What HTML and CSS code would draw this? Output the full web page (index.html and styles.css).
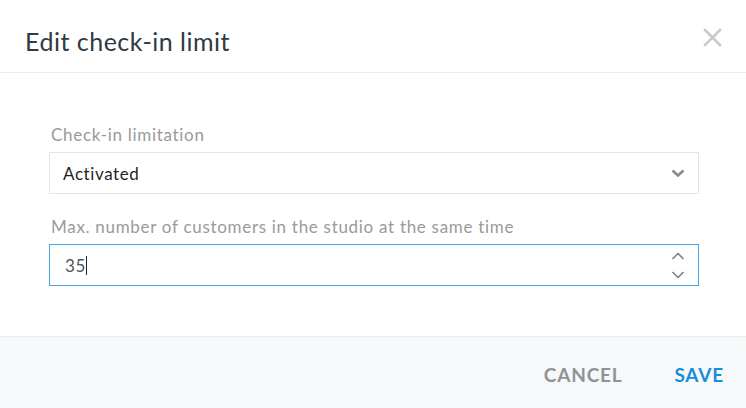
FILE: index.html
```html
<!DOCTYPE html>
<html>
<head>
<meta charset="utf-8">
<link rel="stylesheet" href="styles.css">
</head>
<body>
<div class="dialog">
  <div class="header">
    <h1 class="title">Edit check-in limit</h1>
    <button class="close" aria-label="Close">
      <svg width="19" height="19" viewBox="0 0 19 19"><path d="M2 2L17 17M17 2L2 17" stroke="#c9c9c9" stroke-width="2.6" stroke-linecap="square" fill="none"/></svg>
    </button>
  </div>
  <div class="content">
    <div class="field">
      <label class="label">Check-in limitation</label>
      <div class="box select">
        <span class="value">Activated</span>
        <svg class="chev" width="14" height="8" viewBox="0 0 14 8"><path d="M1.5 1.5L7 6.5L12.5 1.5" stroke="#8a8a8a" stroke-width="2.6" fill="none"/></svg>
      </div>
    </div>
    <div class="field">
      <label class="label">Max. number of customers in the studio at the same time</label>
      <div class="box input">
        <span class="value num">35<span class="caret"></span></span>
        <div class="spin">
          <svg width="14" height="8" viewBox="0 0 14 8"><path d="M1.5 7L7 1.5L12.5 7" stroke="#7a7a7a" stroke-width="1.5" fill="none"/></svg>
          <svg width="14" height="8" viewBox="0 0 14 8"><path d="M1.5 1L7 6.5L12.5 1" stroke="#7a7a7a" stroke-width="1.5" fill="none"/></svg>
        </div>
      </div>
    </div>
  </div>
  <div class="footer">
    <button class="btn cancel">CANCEL</button>
    <button class="btn save">SAVE</button>
  </div>
</div>
</body>
</html>
```
FILE: styles.css
```css
html, body {
  margin: 0;
  padding: 0;
  background: #fff;
}
body {
  font-family: Lato, "Open Sans", sans-serif;
}
.dialog {
  width: 746px;
  height: 408px;
  display: flex;
  flex-direction: column;
  background: #fff;
}
.header {
  height: 73px;
  border-bottom: 1px solid #ececec;
  display: flex;
  align-items: center;
  justify-content: space-between;
  padding: 0 24px 0 25px;
  box-sizing: border-box;
  flex: none;
}
.title {
  margin: 0;
  font-size: 25px;
  font-weight: 400;
  color: #2f3a44;
  padding-top: 9px;
  letter-spacing: 0.5px;
}
.close {
  border: 0;
  background: none;
  padding: 0;
  width: 19px;
  height: 19px;
  display: flex;
  margin-top: 3px;
  cursor: pointer;
}
.content {
  flex: 1;
  padding: 52px 47px 0 49px;
  display: flex;
  flex-direction: column;
  gap: 23px;
}
.field {
  display: flex;
  flex-direction: column;
  gap: 7px;
}
.label {
  font-size: 17px;
  line-height: 20px;
  letter-spacing: 0.7px;
  color: #9a9a9a;
  padding-left: 2px;
}
.box {
  height: 42px;
  box-sizing: border-box;
  border: 1px solid #e5e5e5;
  display: flex;
  align-items: center;
  justify-content: space-between;
  padding: 0 13px 0 13px;
}
.value {
  font-size: 17px;
  letter-spacing: 0.6px;
  color: #1f1f1f;
}
.input {
  border-color: #48a9e2;
  padding-left: 15px;
}
.num {
  color: #4a5560;
  display: flex;
  align-items: center;
}
.caret {
  display: inline-block;
  width: 1px;
  height: 19px;
  background: #222;
  margin-left: 0;
}
.spin {
  display: flex;
  flex-direction: column;
  gap: 11px;
}
.spin svg, .chev {
  display: block;
}
.footer {
  height: 72px;
  flex: none;
  box-sizing: border-box;
  border-top: 1px solid #ececec;
  background: #f7f8fa;
  display: flex;
  align-items: center;
  justify-content: flex-end;
  padding: 4px 22px 0 0;
  gap: 52px;
}
.btn {
  border: 0;
  background: none;
  padding: 0;
  font-family: Lato, "Open Sans", sans-serif;
  font-size: 19px;
  font-weight: 700;
  letter-spacing: 0.8px;
  cursor: pointer;
}
.cancel {
  color: #8f9396;
}
.save {
  color: #1a8ddb;
}
```
